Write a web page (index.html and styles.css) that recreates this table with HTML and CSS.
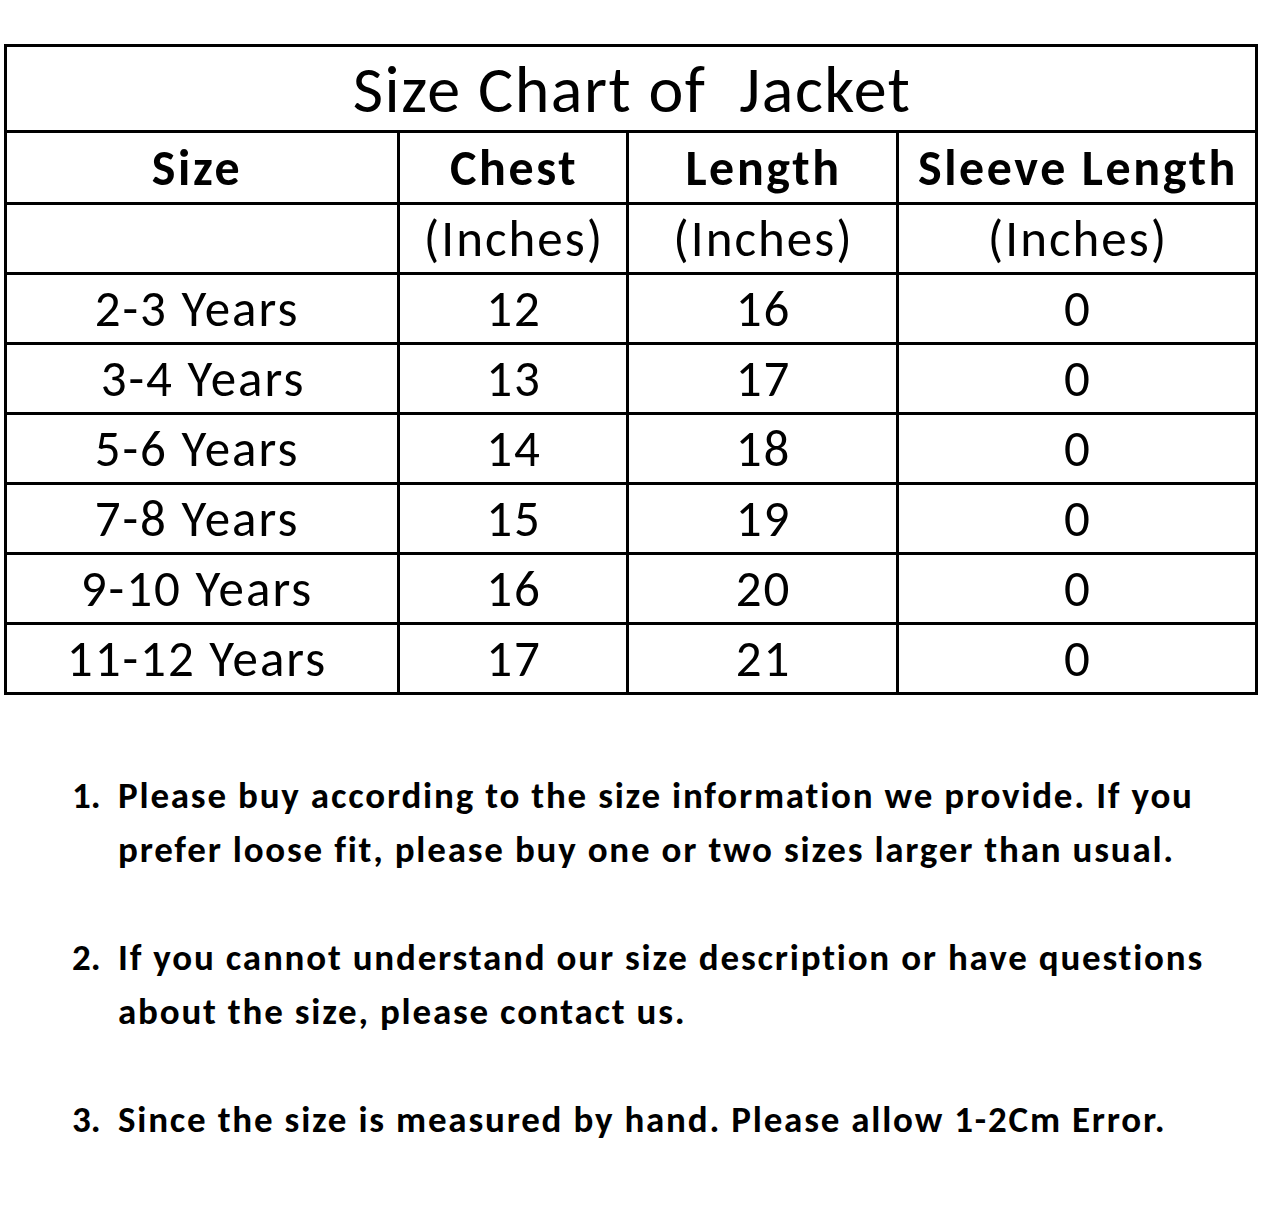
FILE: index.html
```html
<!DOCTYPE html>
<html>
<head>
<meta charset="utf-8">
<link rel="stylesheet" href="styles.css">
</head>
<body>
<div class="page">
  <div class="chart">
    <div class="cell title">Size Chart of&nbsp; Jacket</div>
    <div class="cell head first">Size</div>
    <div class="cell head">Chest</div>
    <div class="cell head">Length</div>
    <div class="cell head">Sleeve Length</div>
    <div class="cell unit first"></div>
    <div class="cell unit">(Inches)</div>
    <div class="cell unit">(Inches)</div>
    <div class="cell unit">(Inches)</div>

    <div class="cell first">2-3 Years</div><div class="cell">12</div><div class="cell">16</div><div class="cell">0</div>
    <div class="cell first shift">3-4 Years</div><div class="cell">13</div><div class="cell">17</div><div class="cell">0</div>
    <div class="cell first">5-6 Years</div><div class="cell">14</div><div class="cell">18</div><div class="cell">0</div>
    <div class="cell first">7-8 Years</div><div class="cell">15</div><div class="cell">19</div><div class="cell">0</div>
    <div class="cell first">9-10 Years</div><div class="cell">16</div><div class="cell">20</div><div class="cell">0</div>
    <div class="cell first">11-12 Years</div><div class="cell">17</div><div class="cell">21</div><div class="cell">0</div>
  </div>

  <ol class="notes">
    <li><span class="num">1.</span><span class="txt">Please buy according to the size information we provide. If you<br>prefer loose fit, please buy one or two sizes larger than usual.</span></li>
    <li><span class="num">2.</span><span class="txt">If you cannot understand our size description or have questions<br>about the size, please contact us.</span></li>
    <li><span class="num">3.</span><span class="txt">Since the size is measured by hand. Please allow 1-2Cm Error.</span></li>
  </ol>
</div>
</body>
</html>
```

FILE: styles.css
```css
html, body {
  margin: 0;
  padding: 0;
  background: #fff;
}

body {
  font-family: "Carlito", "Lato", "Liberation Sans", sans-serif;
  color: #000;
}

.page {
  width: 1262px;
  height: 1214px;
  padding-top: 44px;
  box-sizing: border-box;
}

.chart {
  margin-left: 4px;
  width: 1254px;
  box-sizing: border-box;
  display: grid;
  grid-template-columns: 390px 226px 267px 356px;
  grid-template-rows: 83px 69px 67px repeat(6, 67px);
  gap: 3px;
  padding: 3px;
  background: #000;
}

.cell {
  background: #fff;
  display: flex;
  align-items: center;
  justify-content: center;
  font-size: 51px;
  letter-spacing: 2px;
  white-space: nowrap;
  line-height: 1;
  padding-left: 2px;
}

.cell.first {
  padding-right: 12px;
}

.cell.shift {
  padding-left: 14px;
}

.title {
  grid-column: 1 / -1;
  font-size: 66px;
  letter-spacing: 1.5px;
  padding-top: 2px;
}

.head {
  font-weight: 700;
  font-size: 50px;
  letter-spacing: 2.6px;
}

.notes {
  list-style: none;
  margin: 0;
  padding: 0;
  margin-top: 74px;
  margin-left: 72px;
}

.notes li {
  display: flex;
  font-weight: 700;
  font-size: 37px;
  letter-spacing: 1.8px;
  line-height: 54px;
  margin-bottom: 54px;
  white-space: nowrap;
}

.num {
  width: 46px;
  flex: none;
  letter-spacing: 0;
}
```
